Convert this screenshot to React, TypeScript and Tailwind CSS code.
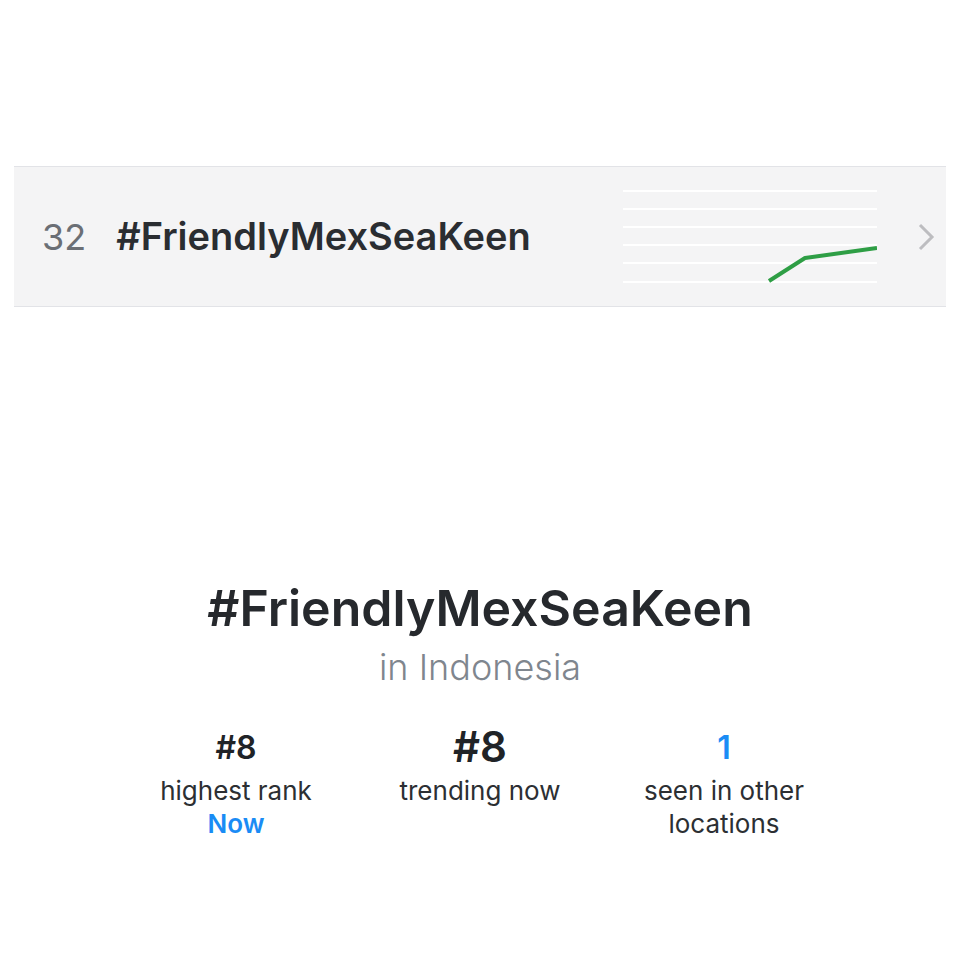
const font = { fontFamily: "Inter, 'Noto Sans', sans-serif" };

const Stat = ({ value, label, extra, big, blue }: any) => (
  <div className="flex flex-col items-center">
    <div className={`h-[44px] flex items-end justify-center ${big ? "" : "pb-[4px]"}`}>
      <span
        className={`leading-none font-semibold ${big ? "text-[42px]" : "text-[32px]"} ${
          blue ? "text-[#1a8cf5]" : "text-[#202327]"
        }`}
      >
        {value}
      </span>
    </div>
    <div className="mt-[6px] text-[26px] leading-[33px] text-[#2c2f33] text-center">{label}</div>
    {extra && <div className="text-[26px] leading-[33px] font-semibold text-[#1a8cf5]">{extra}</div>}
  </div>
);

export default function App() {
  return (
    <div className="w-[960px] h-[960px] bg-white pt-[166px]" style={font}>
      {/* trend row */}
      <div className="mx-[14px] h-[141px] border-y border-[#e2e3e7] bg-[#f4f4f5] flex items-center">
        <span className="ml-[28px] text-[36px] text-[#6b6f75]">32</span>
        <span className="ml-[30px] text-[38px] font-semibold text-[#2a2d31]">#FriendlyMexSeaKeen</span>
        <svg className="ml-auto" width="254" height="139" viewBox="0 0 254 139">
          {[24, 42, 60, 78, 96, 115].map((y) => (
            <line key={y} x1="0" x2="254" y1={y} y2={y} stroke="#ffffff" strokeWidth="2" />
          ))}
          <polyline
            points="146,114 182,91 254,81"
            fill="none"
            stroke="#2e9e45"
            strokeWidth="4"
            strokeLinejoin="round"
          />
        </svg>
        <svg className="ml-[40px] mr-[11px]" width="18" height="28" viewBox="0 0 18 28">
          <polyline points="3,2 15,14 3,26" fill="none" stroke="#bdbdc0" strokeWidth="3" />
        </svg>
      </div>

      {/* detail */}
      <div className="mt-[276px] flex flex-col items-center">
        <div className="text-[50px] leading-none font-semibold text-[#26292d]">#FriendlyMexSeaKeen</div>
        <div className="mt-[12px] text-[36px] leading-[44px] font-light text-[#7f868e]">in Indonesia</div>
        <div className="mt-[35px] grid grid-cols-3 w-[732px]">
          <Stat value="#8" label="highest rank" extra="Now" />
          <Stat value="#8" label="trending now" big />
          <Stat value="1" label={<>seen in other<br />locations</>} blue />
        </div>
      </div>
    </div>
  );
}
